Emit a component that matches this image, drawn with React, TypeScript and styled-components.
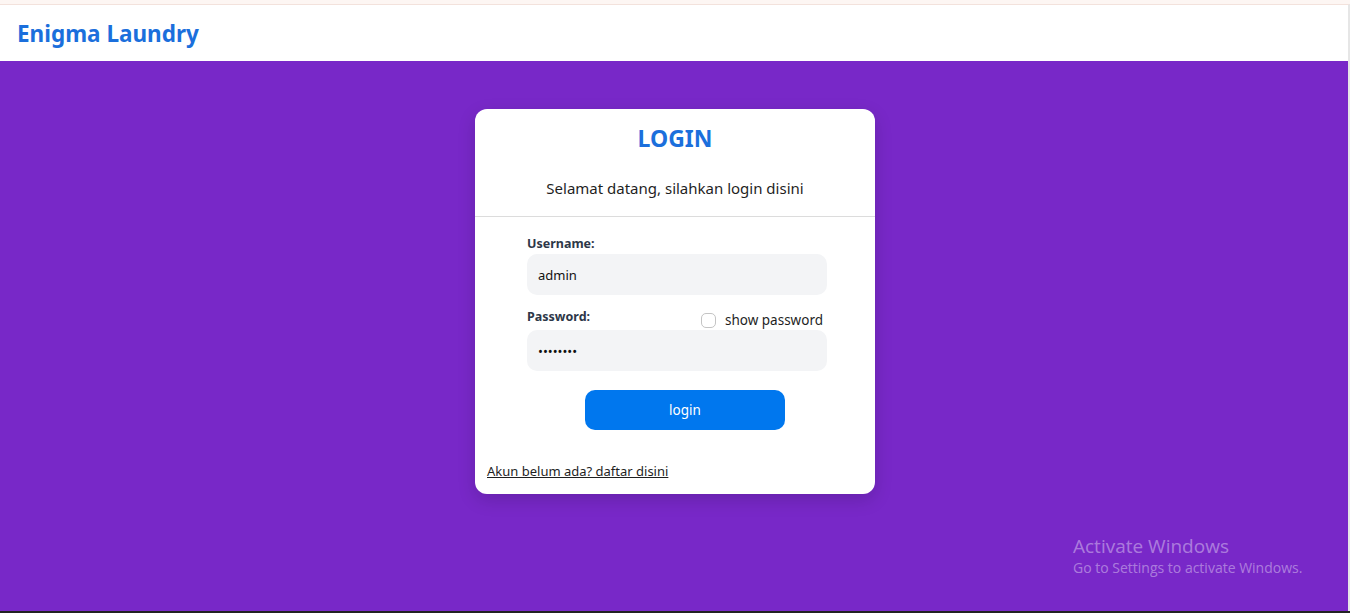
import React, { useState } from 'react';
import styled, { createGlobalStyle } from 'styled-components';

const GlobalStyle = createGlobalStyle`
  html, body {
    margin: 0;
    padding: 0;
    height: 100%;
    overflow: hidden;
  }
  body {
    font-family: 'Noto Sans', 'Open Sans', sans-serif;
    background: #fdf6f3;
  }
`;

const Page = styled.div`
  position: relative;
  display: flex;
  flex-direction: column;
  width: 1350px;
  height: 613px;
  box-sizing: border-box;
  padding-top: 4px;
  border-bottom: 2px solid #222;
`;

const Header = styled.header`
  display: flex;
  align-items: center;
  height: 56px;
  padding: 0 17px;
  background: #ffffff;
  border-top: 1px solid #f3e2dc;
  border-right: 2px solid #e6e6e6;
`;

const Brand = styled.h1`
  margin: 0;
  font-size: 22.5px;
  font-weight: 700;
  color: #1b6fdc;
`;

const Main = styled.main`
  flex: 1;
  display: flex;
  justify-content: center;
  align-items: flex-start;
  padding-top: 48px;
  background: #7828c8;
  border-right: 2px solid #e6e6e6;
  padding-left: 2px;
`;

const Card = styled.div`
  width: 400px;
  box-sizing: border-box;
  background: #ffffff;
  border-radius: 12px;
  box-shadow: 0 6px 18px rgba(0, 0, 0, 0.15);
  padding: 12px 0 13px;
  display: flex;
  flex-direction: column;
`;

const Title = styled.h2`
  margin: 0;
  text-align: center;
  font-size: 23px;
  font-weight: 700;
  color: #1b6fdc;
  line-height: 34px;
`;

const Subtitle = styled.p`
  margin: 23px 0 0;
  text-align: center;
  font-size: 15px;
  color: #1f1f1f;
  line-height: 20px;
  padding-bottom: 18px;
  border-bottom: 1px solid #dcdcdc;
`;

const Form = styled.form`
  display: flex;
  flex-direction: column;
  width: 300px;
  margin: 18px 0 0 52px;
`;

const LabelRow = styled.div`
  display: flex;
  justify-content: space-between;
  align-items: flex-start;
`;

const Label = styled.label`
  font-size: 12.5px;
  font-weight: 700;
  color: #2d3748;
  line-height: 17px;
`;

const Input = styled.input`
  margin-top: 2px;
  height: 41px;
  box-sizing: border-box;
  border: none;
  outline: none;
  border-radius: 10px;
  background: #f3f4f6;
  padding: 0 11px;
  font-family: inherit;
  font-size: 13px;
  color: #111;
`;

const Field = styled.div<{ $gap?: number }>`
  display: flex;
  flex-direction: column;
  margin-top: ${(p) => p.$gap ?? 0}px;
`;

const ShowToggle = styled.label`
  display: flex;
  align-items: center;
  gap: 9px;
  margin: 4px 4px -1px 0;
  font-size: 13.5px;
  line-height: 17px;
  color: #1f1f1f;
  cursor: pointer;
`;

const Check = styled.span<{ $on: boolean }>`
  width: 13px;
  height: 13px;
  border: 1.5px solid #c4c4c4;
  border-radius: 5px;
  background: ${(p) => (p.$on ? '#0077ee' : '#fff')};
`;

const Button = styled.button`
  align-self: flex-start;
  margin: 19px 0 0 58px;
  width: 200px;
  height: 40px;
  border: none;
  border-radius: 10px;
  background: #0077ee;
  color: #ffffff;
  font-family: inherit;
  font-size: 13.5px;
  cursor: pointer;
`;

const Footer = styled.div`
  margin-top: 29px;
  padding-left: 12px;
`;

const Link = styled.a`
  font-size: 13px;
  color: #1f1f1f;
  text-decoration: underline;
  cursor: pointer;
`;

const Watermark = styled.div`
  position: absolute;
  left: 1073px;
  top: 534px;
  font-family: 'Open Sans', 'Noto Sans', sans-serif;
  color: rgba(255, 255, 255, 0.4);
  pointer-events: none;
`;

const WatermarkTitle = styled.div`
  font-size: 19px;
  line-height: 24px;
`;

const WatermarkSub = styled.div`
  font-size: 14px;
  line-height: 20px;
`;

export default function App() {
  const [show, setShow] = useState(false);
  return (
    <>
      <GlobalStyle />
      <Page>
        <Header>
          <Brand>Enigma Laundry</Brand>
        </Header>
        <Main>
          <Card>
            <Title>LOGIN</Title>
            <Subtitle>Selamat datang, silahkan login disini</Subtitle>
            <Form onSubmit={(e) => e.preventDefault()}>
              <Field>
                <Label>Username:</Label>
                <Input defaultValue="admin" />
              </Field>
              <Field $gap={13}>
                <LabelRow>
                  <Label>Password:</Label>
                  <ShowToggle onClick={() => setShow(!show)}>
                    <Check $on={show} />
                    show password
                  </ShowToggle>
                </LabelRow>
                <Input type={show ? 'text' : 'password'} defaultValue="admin123" />
              </Field>
              <Button type="submit">login</Button>
            </Form>
            <Footer>
              <Link>Akun belum ada? daftar disini</Link>
            </Footer>
          </Card>
        </Main>
        <Watermark>
          <WatermarkTitle>Activate Windows</WatermarkTitle>
          <WatermarkSub>Go to Settings to activate Windows.</WatermarkSub>
        </Watermark>
      </Page>
    </>
  );
}
